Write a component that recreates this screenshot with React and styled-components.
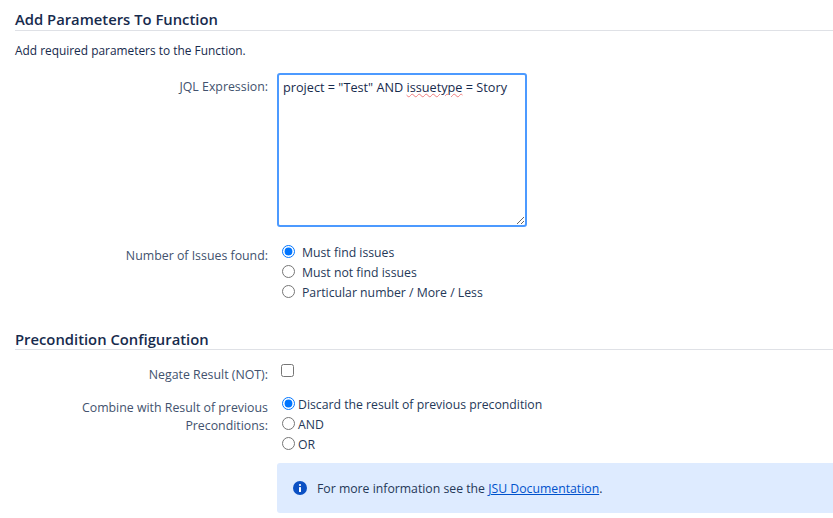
import React from 'react'
import styled, { createGlobalStyle } from 'styled-components'

const GlobalStyle = createGlobalStyle`
  html, body {
    margin: 0;
    background: #fff;
    overflow: hidden;
  }
  body {
    font-family: "Open Sans", "Noto Sans", sans-serif;
    font-size: 12.25px;
    color: #172b4d;
  }
`

const Page = styled.div`
  padding: 11px 0 0 15px;
  width: 818px;
  height: 507px;
`

const Heading = styled.h2`
  margin: ${(props) => props.$top || 0}px 0 0;
  padding-bottom: ${(props) => props.$bottom}px;
  border-bottom: 1px solid #dfe1e6;
  font-size: 14.8px;
  line-height: 17px;
  font-weight: 600;
  color: #172b4d;
`

const Intro = styled.p`
  margin: 11px 0 14px;
  font-size: 11.9px;
  line-height: 17px;
`

const Row = styled.div`
  display: grid;
  grid-template-columns: 253px 1fr;
  column-gap: 9px;
  margin-top: ${(props) => props.$top || 0}px;
`

const Label = styled.label`
  text-align: right;
  font-size: 12.35px;
  line-height: 18px;
  color: #42526e;
  padding-top: ${(props) => props.$top || 0}px;
`

const Editor = styled.div`
  box-sizing: border-box;
  width: 250px;
  height: 154px;
  padding: 3px 4px;
  border: 2px solid #4c9aff;
  border-radius: 3px;
  font-size: 12.7px;
  line-height: 19px;
  color: #172b4d;
  overflow: auto;
  resize: both;
`

const Misspelled = styled.span`
  text-decoration: underline wavy #ef7f7f 1px;
  text-underline-offset: 1px;
`

const Options = styled.div`
  display: flex;
  flex-direction: column;
  padding-left: ${(props) => props.$left || 0}px;
`

const Option = styled.label`
  display: flex;
  align-items: center;
  gap: ${(props) => props.$gap}px;
  height: 20px;
  color: #253858;
`

const Radio = styled.input.attrs({ type: 'radio' })`
  margin: 0;
  width: 13px;
  height: 13px;
  position: relative;
  top: -1px;
`

const Check = styled.input.attrs({ type: 'checkbox' })`
  margin: 2px 0 0 4px;
  width: 13px;
  height: 13px;
`

const Notice = styled.div`
  display: flex;
  align-items: center;
  gap: 10px;
  height: 50px;
  margin-top: 9px;
  padding-left: 16px;
  background: #deebff;
  border-radius: 3px 0 0 3px;
  color: #253858;
`

const DocLink = styled.a`
  color: #0052cc;
  text-decoration: underline;
`

const InfoIcon = () => (
  <svg width="14" height="14" viewBox="0 0 14 14" aria-hidden="true">
    <circle cx="7" cy="7" r="7" fill="#0b50c4" />
    <rect x="6" y="6" width="2" height="5" rx="0.5" fill="#fff" />
    <circle cx="7" cy="4" r="1.1" fill="#fff" />
  </svg>
)

const numberOptions = ['Must find issues', 'Must not find issues', 'Particular number / More / Less']
const combineOptions = ['Discard the result of previous precondition', 'AND', 'OR']

const App = () => {
  return (
    <Page>
      <GlobalStyle />
      <Heading $bottom={2}>Add Parameters To Function</Heading>
      <Intro>Add required parameters to the Function.</Intro>
      <Row>
        <Label $top={5}>JQL Expression:</Label>
        <Editor>project = "Test" AND <Misspelled>issuetype</Misspelled> = Story</Editor>
      </Row>
      <Row $top={15}>
        <Label $top={5}>Number of Issues found:</Label>
        <Options $left={5}>
          {numberOptions.map((text, i) => (
            <Option key={text} $gap={7}>
              <Radio name="found" defaultChecked={i === 0} />
              {text}
            </Option>
          ))}
        </Options>
      </Row>
      <Heading $top={29} $bottom={1}>Precondition Configuration</Heading>
      <Row $top={12}>
        <Label $top={4}>Negate Result (NOT):</Label>
        <Check />
      </Row>
      <Row $top={10}>
        <Label $top={5}>Combine with Result of previous Preconditions:</Label>
        <Options $left={5}>
          {combineOptions.map((text, i) => (
            <Option key={text} $gap={3}>
              <Radio name="combine" defaultChecked={i === 0} />
              {text}
            </Option>
          ))}
        </Options>
      </Row>
      <Row>
        <div />
        <Notice>
          <InfoIcon />
          <span>For more information see the <DocLink href="#">JSU Documentation</DocLink>.</span>
        </Notice>
      </Row>
    </Page>
  )
}

export default App
